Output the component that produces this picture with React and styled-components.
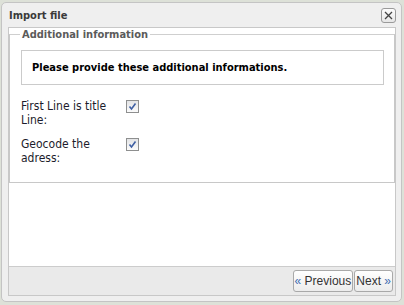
import React from 'react'
import styled, { createGlobalStyle } from 'styled-components'

const Global = createGlobalStyle`
  html, body {
    margin: 0;
    padding: 0;
    background: #dde1d8;
  }
  body {
    width: 404px;
    height: 305px;
    overflow: hidden;
    font-family: "DejaVu Sans Condensed", "DejaVu Sans", sans-serif;
  }
`

const Dialog = styled.div`
  box-sizing: border-box;
  margin: 2px 0 0 1px;
  width: 401px;
  height: 300px;
  border: 1px solid #c4c4c4;
  border-radius: 5px;
  background: #efefef;
  padding: 0 5px 5px 6px;
  display: flex;
  flex-direction: column;
`

const TitleBar = styled.div`
  height: 24px;
  display: flex;
  align-items: center;
  justify-content: space-between;
  padding-left: 1px;
`

const Title = styled.span`
  font-size: 11px;
  font-weight: bold;
  color: #3a3a3a;
`

const CloseButton = styled.button`
  box-sizing: border-box;
  width: 15px;
  height: 15px;
  padding: 0;
  border: 1px solid #9a9a9a;
  border-radius: 3px;
  background: linear-gradient(#fdfdfd, #e6e6e6);
  display: flex;
  align-items: center;
  justify-content: center;
  margin-top: 1px;
`

const Content = styled.div`
  flex: 1;
  border: 1px solid #c8c8c8;
  background: #fff;
  display: flex;
  flex-direction: column;
`

const Fieldset = styled.fieldset`
  margin: 0;
  border: 1px solid #c8c8c8;
  border-top-color: #cfcfcf;
  padding: 9px 10px 17px 11px;
`

const Legend = styled.legend`
  padding: 0 2px;
  margin-left: -1px;
  font-size: 11px;
  font-weight: bold;
  color: #5b5b5b;
`

const Message = styled.div`
  box-sizing: border-box;
  height: 35px;
  border: 1px solid #cbcbcb;
  display: flex;
  align-items: center;
  padding-left: 10px;
  font-size: 11px;
  font-weight: bold;
  color: #000;
  margin-bottom: 14px;
`

const Rows = styled.div`
  display: grid;
  grid-template-columns: 105px 1fr;
  row-gap: 10px;
`

const Label = styled.span`
  font-size: 12px;
  line-height: 14px;
  color: #1c1c2c;
`

const Check = styled.span`
  box-sizing: border-box;
  width: 13px;
  height: 13px;
  border: 1px solid #8e8f8f;
  background: linear-gradient(#e3e4e6, #fbfbfb);
  display: flex;
  align-items: center;
  justify-content: center;
  margin-top: 1px;
`

const Spacer = styled.div`
  flex: 1;
`

const ButtonBar = styled.div`
  height: 28px;
  border-top: 1px solid #cccccc;
  background: #eaeaea;
  display: flex;
  justify-content: flex-end;
  align-items: center;
  padding-right: 2px;
`

const NavButton = styled.button`
  box-sizing: border-box;
  height: 22px;
  margin-left: 1px;
  padding: 0 1px;
  border: 1px solid #a9a9a9;
  border-radius: 3px;
  background: linear-gradient(#ffffff, #ececec);
  font-family: "Liberation Sans", Arial, sans-serif;
  font-size: 12px;
  color: #333;
`

const Arrow = styled.span`
  color: #3f6db1;
`

const CheckMark = () => (
  <svg width="9" height="9" viewBox="0 0 9 9">
    <path d="M1.5 4.5 L3.5 7 L7.5 1.5" fill="none" stroke="#3e5fa3" strokeWidth="1.6" />
  </svg>
)

const App = () => {
  return (
    <>
      <Global />
      <Dialog>
        <TitleBar>
          <Title>Import file</Title>
          <CloseButton>
            <svg width="9" height="9" viewBox="0 0 9 9">
              <path d="M1 1 L8 8 M8 1 L1 8" stroke="#444" strokeWidth="1.3" />
            </svg>
          </CloseButton>
        </TitleBar>
        <Content>
          <Fieldset>
            <Legend>Additional information</Legend>
            <Message>Please provide these additional informations.</Message>
            <Rows>
              <Label>First Line is title Line:</Label>
              <div><Check><CheckMark /></Check></div>
              <Label>Geocode the adress:</Label>
              <div><Check><CheckMark /></Check></div>
            </Rows>
          </Fieldset>
          <Spacer />
          <ButtonBar>
            <NavButton><Arrow>«</Arrow> Previous</NavButton>
            <NavButton>Next <Arrow>»</Arrow></NavButton>
          </ButtonBar>
        </Content>
      </Dialog>
    </>
  )
}

export default App
